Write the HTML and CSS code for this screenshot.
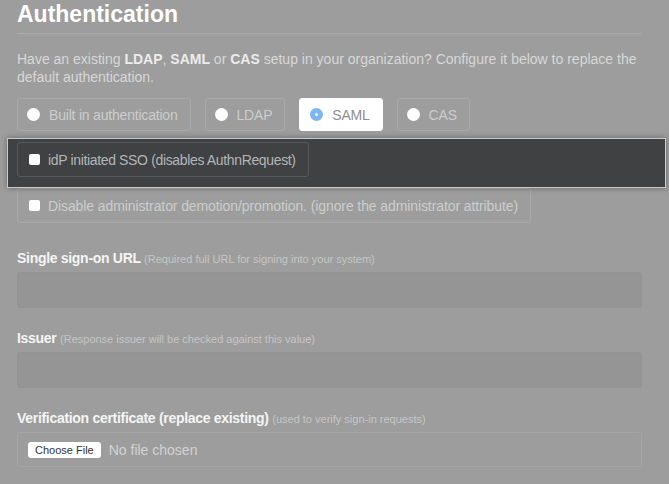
FILE: index.html
```html
<!DOCTYPE html>
<html>
<head>
<meta charset="utf-8">
<link rel="stylesheet" href="styles.css">
</head>
<body>
<div class="page">
  <h1 class="title">Authentication</h1>
  <p class="intro">Have an existing <b>LDAP</b>, <b>SAML</b> or <b>CAS</b> setup in your organization? Configure it below to replace the default authentication.</p>
  <div class="radios">
    <label class="radio"><span class="dot"></span>Built in authentication</label>
    <label class="radio"><span class="dot"></span>LDAP</label>
    <label class="radio selected"><span class="dot"></span>SAML</label>
    <label class="radio"><span class="dot"></span>CAS</label>
  </div>
  <div class="highlight">
    <label class="check dark"><span class="box"></span>idP initiated SSO (disables AuthnRequest)</label>
  </div>
  <label class="check second"><span class="box"></span>Disable administrator demotion/promotion. (ignore the administrator attribute)</label>

  <div class="field first">
    <div class="label">Single sign-on URL <span class="hint">(Required full URL for signing into your system)</span></div>
    <div class="input"></div>
  </div>
  <div class="field">
    <div class="label">Issuer <span class="hint">(Response issuer will be checked against this value)</span></div>
    <div class="input"></div>
  </div>
  <div class="field">
    <div class="label">Verification certificate (replace existing) <span class="hint">(used to verify sign-in requests)</span></div>
    <div class="file"><span class="choose">Choose File</span><span class="nofile">No file chosen</span></div>
  </div>
</div>
</body>
</html>
```
FILE: styles.css
```css
html, body {
  margin: 0;
  padding: 0;
  background: #9c9d9c;
  font-family: "Liberation Sans", Arial, sans-serif;
  height: 100%;
  overflow: hidden;
}
.page {
  padding: 0 27px 0 17px;
}
.title {
  margin: 0;
  font-size: 23px;
  line-height: 28px;
  font-weight: bold;
  color: #ffffff;
  padding-bottom: 5px;
  border-bottom: 1px solid #a9aaa9;
}
.intro {
  margin: 16px 0 0;
  font-size: 14px;
  line-height: 18px;
  color: #d8d8d8;
}
.intro b {
  color: #ececec;
}
.radios {
  display: flex;
  gap: 14px;
  margin-top: 12px;
}
.radio {
  display: flex;
  align-items: center;
  height: 31px;
  padding: 0 12px 0 9px;
  border: 1px solid #a8a9a8;
  border-radius: 3px;
  font-size: 14px;
  letter-spacing: -0.2px;
  color: #cdcdcd;
}
.dot {
  width: 13px;
  height: 13px;
  border-radius: 50%;
  background: #fdfdfd;
  margin-right: 9px;
  flex: none;
}
.radio.selected {
  background: #ffffff;
  border-color: #ffffff;
  color: #8e8e8e;
  padding-left: 10px;
}
.radio.selected .dot {
  background: #7fb5f0;
  position: relative;
}
.radio.selected .dot::after {
  content: "";
  position: absolute;
  left: 5px;
  top: 5px;
  width: 3px;
  height: 3px;
  border-radius: 50%;
  background: #ffffff;
}
.highlight {
  margin: 7px -24px 0 -10px;
  padding: 3px 10px 10px 9px;
  background: #3f4142;
  border: 1px solid #c9cac9;
  box-shadow: 0 0 6px rgba(0, 0, 0, 0.35);
  position: relative;
}
.check {
  display: inline-flex;
  align-items: center;
  height: 33px;
  padding: 0 12px 0 11px;
  border: 1px solid #a8a9a8;
  border-radius: 3px;
  font-size: 14px;
  letter-spacing: -0.1px;
  color: #cdcdcd;
}
.check .box {
  width: 11px;
  height: 11px;
  border-radius: 2px;
  background: #fdfdfd;
  margin-right: 8px;
  flex: none;
}
.check.dark {
  border-color: #58595a;
  color: #b3b6b9;
  letter-spacing: -0.35px;
}
.field {
  margin-top: 21px;
}
.field.first {
  margin-top: 26px;
}
.label {
  font-size: 14px;
  line-height: 18px;
  font-weight: bold;
  color: #f5f5f5;
  margin-bottom: 4px;
  letter-spacing: -0.3px;
}
.hint {
  font-size: 11px;
  font-weight: normal;
  color: #c6c6c6;
  letter-spacing: 0;
}
.input {
  height: 34px;
  background: #949594;
  border: 1px solid #929392;
  border-radius: 3px;
}
.file {
  height: 33px;
  border: 1px solid #a5a6a5;
  border-radius: 3px;
  display: flex;
  align-items: center;
  padding-left: 10px;
}
.choose {
  background: #ffffff;
  border-radius: 3px;
  font-size: 11px;
  color: #333333;
  padding: 2px 7px;
  line-height: 12px;
}
.nofile {
  margin-left: 8px;
  font-size: 14px;
  color: #d3d3d3;
}
```
